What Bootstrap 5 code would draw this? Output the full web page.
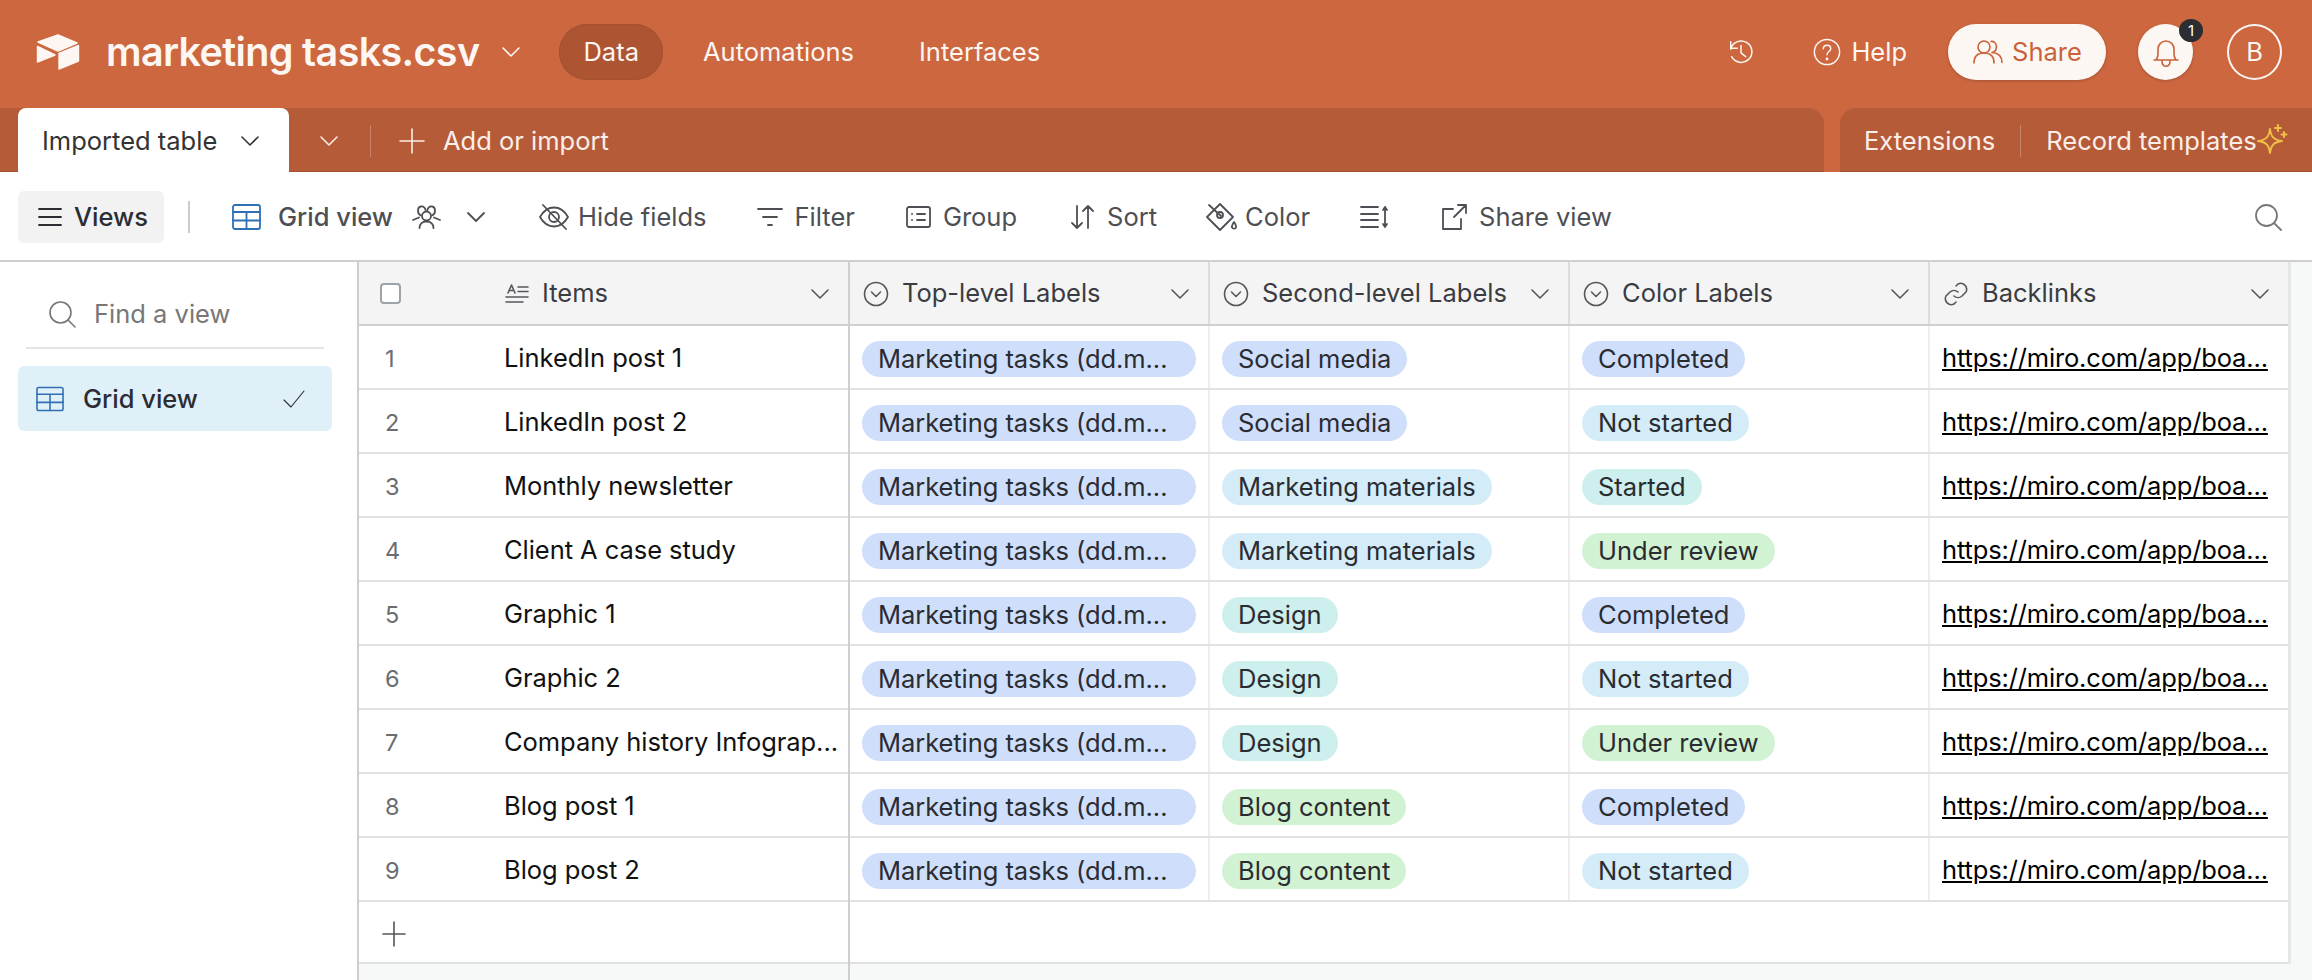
<!DOCTYPE html>
<html lang="en"><head><meta charset="utf-8"><title>marketing tasks.csv</title>
<link href="https://cdn.jsdelivr.net/npm/bootstrap@5.3.0/dist/css/bootstrap.min.css" rel="stylesheet">
<style>
html,body{height:980px;overflow:hidden}
body{font-family:Inter,"Liberation Sans",sans-serif;font-size:25.5px;color:#1d1f25;background:#fff}
svg{flex:none;fill:none;stroke:currentColor;stroke-width:1.6;stroke-linecap:round;stroke-linejoin:round}
.gl-7{margin-left:7px}.gl-9{margin-left:9px}.gl-10{margin-left:10px}.gl-12{margin-left:12px}.gl-16{margin-left:16px}.gl-17{margin-left:17px}.gl-18{margin-left:18px}.gl-19{margin-left:19px}.gl-22{margin-left:22px}.gl-24{margin-left:24px}.gl-26{margin-left:26px}.gl-28{margin-left:28px}.gl-30{margin-left:30px}.gl-31{margin-left:31px}.gl-38{margin-left:38px}.gl-41{margin-left:41px}.gl-42{margin-left:42px}.gl-49{margin-left:49px}.gl-50{margin-left:50px}.gl-51{margin-left:51px}.gl-52{margin-left:52px}.gl-53{margin-left:53px}.gl-58{margin-left:58px}
.topbar{height:108px;background:#cc673f;color:#fdf6f2;padding:0 30px 4px 36px}
.logo-mark{fill:#fdf6f2;stroke:#fdf6f2;stroke-width:1.4}
.brand-title{font-size:39.5px;font-weight:600;letter-spacing:-.65px;line-height:1;white-space:nowrap;padding-top:2px}
.nav-pillish{height:56px;border-radius:28px;padding:1px 24px 0;display:flex;align-items:center}
.nav-pillish.active-tab{background:#ad5532;box-shadow:inset 0 0 0 1px #a5512f}
.share-btn{width:158px;height:56px;border-radius:28px;background:#fdf7f4;color:#c9623a;box-shadow:0 1px 3px #0003}
.bell-btn{width:55px;height:56px;border-radius:50%;background:#fdf7f4;color:#c9623a;position:relative;box-shadow:0 1px 3px #0003;margin:0 34px 0 32px}
.bell-count{position:absolute;top:-5px;right:-10px;width:24px;height:23px;border-radius:50%;background:#2b2d31;color:#fff;font-size:15px;line-height:23px;text-align:center}
.avatar-btn{width:55px;height:56px;border-radius:50%;border:2px solid #fdf6f2}
.tabstrip{height:64px;gap:16px;background:#cc673f}
.tabstrip-left{flex:0 0 1824px;background:#b65b38;border-top-right-radius:16px;padding:2px 0 0 18px;color:#fbeee8;box-shadow:inset 0 -1px 0 #a5512f}
.tabstrip-right{flex:1;background:#b65b38;border-top-left-radius:16px;padding:2px 0 0 24px;color:#fbeee8;box-shadow:inset 0 -1px 0 #a5512f}
.table-tab{width:271px;height:64px;align-self:flex-end;background:#fff;color:#333;border-radius:8px 8px 0 0;padding:2px 0 0 24px}
.strip-sep{width:1px;height:32px;background:#ffffff40}
.strip-sep.wide{margin:0 25px}
.spark{color:#f0bf45;margin-top:-6px;stroke-width:2}
.toolbar{height:88px;padding:2px 30px 0 18px;color:#4d4f55}
.toolbar svg{stroke-width:1.8}
.views-btn{width:146px;height:52px;background:#f2f2f2;border-radius:6px;color:#2b2d33;font-weight:500;padding-left:20px}
.bar-sep{width:2px;height:32px;background:#ccc}
.blue-icon{color:#2f6fb5}
.tool{display:flex;align-items:center;white-space:nowrap}
.tool-strong{font-weight:500}
.search-icon{color:#777}
.content-area{height:720px;border-top:2px solid #cfcfcf}
.side-panel{flex:0 0 357px;padding:0 25px 0 18px;position:relative}
.find-row{margin:17px 8px 0;padding:2px 0 0 22px;border-bottom:2px solid #e5e5e5;color:#777;height:70px}
.view-row{height:65px;margin-top:17px;background:#e0f0f9;border-radius:6px;padding:1px 27px 0 18px;font-weight:500;color:#2b2d33}
.check-thin{stroke-width:1.1}
.grid-pane{flex:1;background:#f7f8f8;border-left:2px solid #cfcfcf;position:relative;min-width:0}
.sheet{width:1930px;border-collapse:collapse;table-layout:fixed}
.sheet col:nth-child(1){width:490px}
.sheet col:nth-child(n+2){width:360px}
.sheet th,.sheet td{padding:0;height:64px;border-bottom:2px solid #dfe1e3;border-right:2px solid #eeeeee;background:#fff;font-weight:400;white-space:nowrap;overflow:hidden;vertical-align:middle}
.sheet th{height:63px;background:#f4f4f4;color:#3a3c42;border-bottom-color:#d0d0d0;border-right-color:#dcdcdc}
.sheet .frozen{border-right:2px solid #cfcfcf}
.sheet .endcol{border-right:3px solid #e6e6e6}
.sheet .add-row td{height:62px}
.head-in{display:flex;align-items:center;height:100%;padding:1px 18px 0 13px}
.head-in span{flex:1;margin-left:13px}
.head-in svg{color:#55575c}
.head-first{padding:1px 18px 0 21px}
.check-box{width:21px;height:21px;border:2px solid #9ea3a8;border-radius:4px;background:#fff;margin-right:104px;flex:none}
.rownum{display:inline-block;width:145px;color:#6b6d70;font-size:23.5px;padding-left:26px}
.rowcell{display:flex;align-items:center;height:100%;color:#111;padding-top:3px}
.item-text{white-space:nowrap;color:#111;letter-spacing:-.05px}
.tagpill{display:inline-block;height:36px;line-height:36px;border-radius:18px;padding:0 16px;color:#2a2c31;margin-left:12px;vertical-align:middle}
.tag-wide{width:334px;letter-spacing:-.06px}
.tag-blue{background:#cfdffb}.tag-sky{background:#d3ecf8}.tag-teal{background:#cdefee}.tag-green{background:#d1f2d3}
.linkcell{display:inline-block;margin-left:12px;color:#000;text-decoration:underline;letter-spacing:-.15px;padding-top:2px}
.add-plus{margin-left:23px;color:#555}
.under-lines{position:absolute;top:0;bottom:0;left:489px;width:2px;background:#cfcfcf;pointer-events:none}
</style></head><body>
<header class="topbar d-flex align-items-center">
 <svg class="logo-mark" width="44" height="36" viewBox="0 0 44 36"><path d="M2 8 22 1l19 8-19 8ZM1.500 12.500 19 21 1.500 28ZM23 19.500 42.500 11.500V27L23 35Z"/></svg>
 <div class="brand-title gl-26">marketing tasks.csv</div>
 <svg class="gl-22" width="20" height="12" viewBox="0 0 20 12"><path d="M2 2l8 8 8-8"/></svg>
 <nav class="d-flex align-items-center gl-38">
  <div class="nav-pillish active-tab">Data</div>
  <div class="nav-pillish gl-16">Automations</div>
  <div class="nav-pillish gl-17">Interfaces</div>
 </nav>
 <div class="ms-auto d-flex align-items-center">
  <svg width="28" height="30" viewBox="0 0 30 30"><path d="M4 4v7h7M4 12a11.500 11.500 0 1 1 1 8M15 8v8l5 4"/></svg>
  <svg class="gl-58" width="28" height="30" viewBox="0 0 30 30"><circle cx="15" cy="15" r="13.500"/><path d="M11 11.500c.5-5 8-5 8 0 0 3-4 3-4 6.500"/><circle cx="15" cy="22.500" r=".7"/></svg>
  <span class="gl-10">Help</span>
  <div class="share-btn gl-41 d-flex align-items-center justify-content-center gap-2">
   <svg width="32" height="26" viewBox="0 0 32 26"><circle cx="12" cy="8" r="6"/><path d="M2 24c0-7 4-10 10-10s10 3 10 10M19 2.500c6-1 8 9 1 11 6 .5 10 4 10 10"/></svg><span>Share</span></div>
  <div class="bell-btn d-flex align-items-center justify-content-center">
   <svg width="26" height="32" viewBox="0 0 26 32"><path d="M3 24c2-3 2-4 2-11a8 8 0 0 1 16 0c0 7 0 8 2 11ZM1 24h24M9 25c0 7 8 7 8 0"/></svg>
   <span class="bell-count">1</span></div>
  <div class="avatar-btn d-flex align-items-center justify-content-center">B</div>
 </div>
</header>
<div class="tabstrip d-flex">
 <div class="tabstrip-left d-flex align-items-center">
  <div class="table-tab d-flex align-items-center">Imported table<svg class="ms-4" width="18" height="12" viewBox="0 0 18 12"><path d="M1 2l8 8 8-8"/></svg></div>
  <svg class="gl-30" width="20" height="12" viewBox="0 0 20 12"><path d="M2 2l8 8 8-8"/></svg>
  <div class="strip-sep gl-31"></div>
  <svg class="gl-28" width="26" height="26" viewBox="0 0 26 26"><path d="M13 1v24M1 13h24"/></svg>
  <span class="gl-18">Add or import</span>
 </div>
 <div class="tabstrip-right d-flex align-items-center">
  <span>Extensions</span><div class="strip-sep wide"></div><span>Record templates</span>
  <svg class="spark" width="32" height="34" viewBox="0 0 32 34"><path d="M13 8c1 8 4 11 12 12-8 1-11 4-12 12-1-8-4-11-12-12 8-1 11-4 12-12ZM21 4v6M18 7h6M27 11v5M24.500 13.500h5"/></svg>
 </div>
</div>
<div class="toolbar d-flex align-items-center">
 <div class="views-btn d-flex align-items-center gap-2"><svg width="24" height="20" viewBox="0 0 24 20"><path d="M1 2h22M1 10h22M1 18h22"/></svg><span class="ms-1">Views</span></div>
 <div class="bar-sep gl-24"></div>
 <svg class="gl-42 blue-icon" width="29" height="26" viewBox="0 0 29 26"><rect x="1" y="1" width="27" height="24" rx="2"/><path d="M1 8h27M1 16.500h27M14.500 8v17"/></svg>
 <span class="tool tool-strong gl-17">Grid view</span>
 <svg class="gl-18" width="31" height="24" viewBox="0 0 31 24"><circle cx="15.500" cy="11" r="4.500"/><path d="M8.500 23c0-4 3-6.500 7-6.500s7 2.500 7 6.500M10 10.500C6 9 6 2 10 1.500c3-.4 4.500 2 4.500 3.500M21 10.500C25 9 25 2 21 1.500c-3-.4-4.500 2-4.500 3.500M8 12.500 2 15M23 12.500 29 15"/></svg>
 <svg class="gl-24" width="20" height="12" viewBox="0 0 20 12"><path d="M2 2l8 8 8-8"/></svg>
 <svg class="gl-53" width="30" height="26" viewBox="0 0 30 26"><path d="M1 13C5 6 9 3.500 15 3.500S25 6 29 13c-4 7-8 9.500-14 9.500S5 20 1 13Z"/><circle cx="15" cy="13" r="5"/><path d="M4 1l23 24"/></svg>
 <span class="tool gl-9">Hide fields</span>
 <svg class="gl-50" width="26" height="20" viewBox="0 0 26 20"><path d="M1 2h24M6 10h14M11 18h4"/></svg>
 <span class="tool gl-12">Filter</span>
 <svg class="gl-51" width="25" height="22" viewBox="0 0 25 22"><rect x="1" y="1" width="23" height="20" rx="2"/><path d="M6 8h.1M11 8h8M6 14h.1M11 14h8"/></svg>
 <span class="tool gl-12">Group</span>
 <svg class="gl-53" width="25" height="24" viewBox="0 0 25 24"><path d="M7 1v22M2 18l5 5 5-5M18 23V1M13 6l5-5 5 5"/></svg>
 <span class="tool gl-12">Sort</span>
 <svg class="gl-49" width="32" height="29" viewBox="0 0 32 29"><path d="M14 1 27 14 14 27 1 14ZM3 2l12 11"/><circle cx="14" cy="12" r="3"/><path d="M28 19c-2 3-2.500 4-2 5.500.5 1.500 3.500 1.500 4 0 .5-1.500 0-2.500-2-5.500Z"/></svg>
 <span class="tool gl-7">Color</span>
 <svg class="gl-50" width="29" height="24" viewBox="0 0 29 24"><path d="M1 2h17M1 9h17M1 15h17M1 22h17M25 2v20M23 5l2-3 2 3M23 19l2 3 2-3"/></svg>
 <svg class="gl-52" width="26" height="27" viewBox="0 0 26 27"><path d="M12 5H2v20h18V15M17 1h8v8M25 1 13 13"/></svg>
 <span class="tool gl-12">Share view</span>
 <svg class="ms-auto search-icon" width="28" height="28" viewBox="0 0 28 28"><circle cx="12.500" cy="12.500" r="10.500"/><path d="M20 20l7 7"/></svg>
</div>
<div class="content-area d-flex">
 <aside class="side-panel">
  <div class="find-row d-flex align-items-center"><svg width="28" height="28" viewBox="0 0 28 28"><circle cx="12.500" cy="12.500" r="10.500"/><path d="M20 20l7 7"/></svg><span class="gl-18">Find a view</span></div>
  <div class="view-row d-flex align-items-center"><svg class="blue-icon" width="28" height="26" viewBox="0 0 29 26"><rect x="1" y="1" width="27" height="24" rx="2"/><path d="M1 8h27M1 16.500h27M14.500 8v17"/></svg><span class="gl-19">Grid view</span><svg class="ms-auto check-thin" width="22" height="18" viewBox="0 0 22 18"><path d="M1 10l7 7L21 1"/></svg></div>
 </aside>
 <main class="grid-pane">
  <div class="under-lines"></div>
  <table class="sheet"><colgroup><col><col><col><col><col></colgroup>
  <thead><tr>
   <th class="frozen"><div class="head-in head-first"><div class="check-box"></div><svg width="24" height="20" viewBox="0 0 24 20"><path d="M3 9 6.500 1 10 9M4 6.500h5M13 3h10M13 7.500h10M1 13h22M1 18h17"/></svg><span>Items</span><svg width="20" height="12" viewBox="0 0 20 12"><path d="M2 2l8 8 8-8"/></svg></div></th>
   <th><div class="head-in"><svg width="26" height="26" viewBox="0 0 26 26"><circle cx="13" cy="13" r="11.500"/><path d="M8.500 11l4.500 4.500 4.500-4.500"/></svg><span>Top-level Labels</span><svg width="20" height="12" viewBox="0 0 20 12"><path d="M2 2l8 8 8-8"/></svg></div></th>
   <th><div class="head-in"><svg width="26" height="26" viewBox="0 0 26 26"><circle cx="13" cy="13" r="11.500"/><path d="M8.500 11l4.500 4.500 4.500-4.500"/></svg><span>Second-level Labels</span><svg width="20" height="12" viewBox="0 0 20 12"><path d="M2 2l8 8 8-8"/></svg></div></th>
   <th><div class="head-in"><svg width="26" height="26" viewBox="0 0 26 26"><circle cx="13" cy="13" r="11.500"/><path d="M8.500 11l4.500 4.500 4.500-4.500"/></svg><span>Color Labels</span><svg width="20" height="12" viewBox="0 0 20 12"><path d="M2 2l8 8 8-8"/></svg></div></th>
   <th class="endcol"><div class="head-in"><svg width="26" height="26" viewBox="0 0 26 26"><path d="M11 15a6 6 0 0 0 8 0l4-4a6 6 0 0 0-8-8l-2 2M15 11a6 6 0 0 0-8 0l-4 4a6 6 0 0 0 8 8l2-2"/></svg><span>Backlinks</span><svg width="20" height="12" viewBox="0 0 20 12"><path d="M2 2l8 8 8-8"/></svg></div></th>
  </tr></thead>
  <tbody>
  <tr><td class="frozen"><div class="rowcell"><span class="rownum">1</span><span class="item-text">LinkedIn post 1</span></div></td><td><span class="tagpill tag-blue tag-wide">Marketing tasks (dd.m...</span></td><td><span class="tagpill tag-blue">Social media</span></td><td><span class="tagpill tag-blue">Completed</span></td><td class="endcol"><a class="linkcell" href="#">https://miro.com/app/boa...</a></td></tr>
  <tr><td class="frozen"><div class="rowcell"><span class="rownum">2</span><span class="item-text">LinkedIn post 2</span></div></td><td><span class="tagpill tag-blue tag-wide">Marketing tasks (dd.m...</span></td><td><span class="tagpill tag-blue">Social media</span></td><td><span class="tagpill tag-sky">Not started</span></td><td class="endcol"><a class="linkcell" href="#">https://miro.com/app/boa...</a></td></tr>
  <tr><td class="frozen"><div class="rowcell"><span class="rownum">3</span><span class="item-text">Monthly newsletter</span></div></td><td><span class="tagpill tag-blue tag-wide">Marketing tasks (dd.m...</span></td><td><span class="tagpill tag-sky">Marketing materials</span></td><td><span class="tagpill tag-teal">Started</span></td><td class="endcol"><a class="linkcell" href="#">https://miro.com/app/boa...</a></td></tr>
  <tr><td class="frozen"><div class="rowcell"><span class="rownum">4</span><span class="item-text">Client A case study</span></div></td><td><span class="tagpill tag-blue tag-wide">Marketing tasks (dd.m...</span></td><td><span class="tagpill tag-sky">Marketing materials</span></td><td><span class="tagpill tag-green">Under review</span></td><td class="endcol"><a class="linkcell" href="#">https://miro.com/app/boa...</a></td></tr>
  <tr><td class="frozen"><div class="rowcell"><span class="rownum">5</span><span class="item-text">Graphic 1</span></div></td><td><span class="tagpill tag-blue tag-wide">Marketing tasks (dd.m...</span></td><td><span class="tagpill tag-teal">Design</span></td><td><span class="tagpill tag-blue">Completed</span></td><td class="endcol"><a class="linkcell" href="#">https://miro.com/app/boa...</a></td></tr>
  <tr><td class="frozen"><div class="rowcell"><span class="rownum">6</span><span class="item-text">Graphic 2</span></div></td><td><span class="tagpill tag-blue tag-wide">Marketing tasks (dd.m...</span></td><td><span class="tagpill tag-teal">Design</span></td><td><span class="tagpill tag-sky">Not started</span></td><td class="endcol"><a class="linkcell" href="#">https://miro.com/app/boa...</a></td></tr>
  <tr><td class="frozen"><div class="rowcell"><span class="rownum">7</span><span class="item-text">Company history Infograp...</span></div></td><td><span class="tagpill tag-blue tag-wide">Marketing tasks (dd.m...</span></td><td><span class="tagpill tag-teal">Design</span></td><td><span class="tagpill tag-green">Under review</span></td><td class="endcol"><a class="linkcell" href="#">https://miro.com/app/boa...</a></td></tr>
  <tr><td class="frozen"><div class="rowcell"><span class="rownum">8</span><span class="item-text">Blog post 1</span></div></td><td><span class="tagpill tag-blue tag-wide">Marketing tasks (dd.m...</span></td><td><span class="tagpill tag-green">Blog content</span></td><td><span class="tagpill tag-blue">Completed</span></td><td class="endcol"><a class="linkcell" href="#">https://miro.com/app/boa...</a></td></tr>
  <tr><td class="frozen"><div class="rowcell"><span class="rownum">9</span><span class="item-text">Blog post 2</span></div></td><td><span class="tagpill tag-blue tag-wide">Marketing tasks (dd.m...</span></td><td><span class="tagpill tag-green">Blog content</span></td><td><span class="tagpill tag-sky">Not started</span></td><td class="endcol"><a class="linkcell" href="#">https://miro.com/app/boa...</a></td></tr>
  <tr class="add-row"><td class="frozen"><svg class="add-plus" width="24" height="26" viewBox="0 0 24 26"><path d="M12 1v24M1 13h22"/></svg></td><td colspan="4" class="endcol"></td></tr>
  </tbody></table>
 </main>
</div>
<script src="https://cdn.jsdelivr.net/npm/bootstrap@5.3.0/dist/js/bootstrap.bundle.min.js"></script>
</body></html>
